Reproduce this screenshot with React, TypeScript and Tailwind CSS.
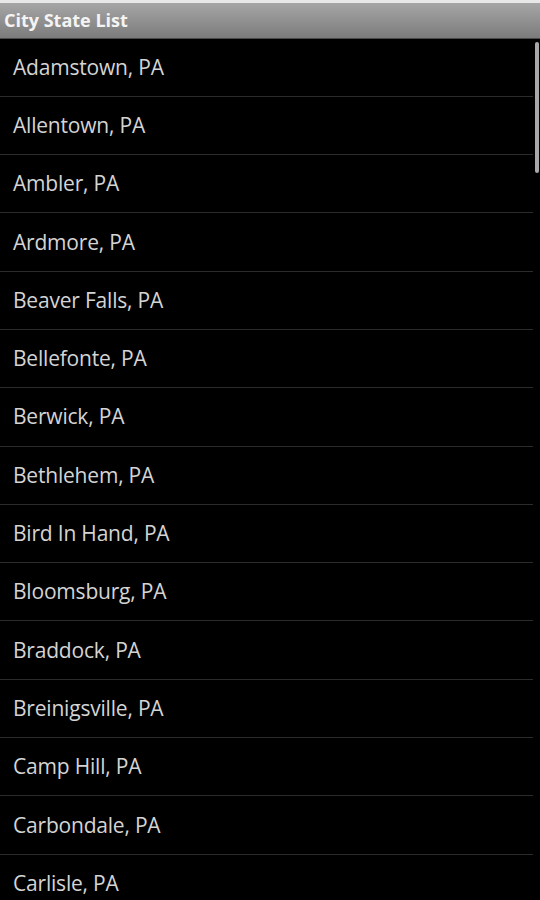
import React from "react";

const cities = [
  "Adamstown, PA",
  "Allentown, PA",
  "Ambler, PA",
  "Ardmore, PA",
  "Beaver Falls, PA",
  "Bellefonte, PA",
  "Berwick, PA",
  "Bethlehem, PA",
  "Bird In Hand, PA",
  "Bloomsburg, PA",
  "Braddock, PA",
  "Breinigsville, PA",
  "Camp Hill, PA",
  "Carbondale, PA",
  "Carlisle, PA",
];

export default function App() {
  return (
    <div
      className="w-[540px] h-[900px] bg-black overflow-hidden flex flex-col"
      style={{ fontFamily: '"Open Sans", "Noto Sans", sans-serif' }}
    >
      <div className="h-[3px] bg-[#e8e8e8] shrink-0" />
      <div className="h-[35.5px] shrink-0 flex items-center pl-[4px] bg-gradient-to-b from-[#a6a6a6] to-[#7c7c7c] border-b border-[#4a4a4a]">
        <span className="text-[18px] leading-none font-bold text-[#f4f4f4]">City State List</span>
      </div>
      <div className="relative flex-1 overflow-hidden">
        <div className="flex flex-col w-[533px]">
          {cities.map((c) => (
            <div
              key={c}
              className="h-[58.3px] shrink-0 flex items-center pl-[13px] border-b border-[#2b2b2b]"
            >
              <span className="text-[21px] leading-none text-[#d4d4d4] tracking-[-0.2px]">{c}</span>
            </div>
          ))}
        </div>
        <div className="absolute right-[1px] top-[3px] w-[4px] h-[131px] rounded-full bg-[#a8a8a8]" />
      </div>
    </div>
  );
}
